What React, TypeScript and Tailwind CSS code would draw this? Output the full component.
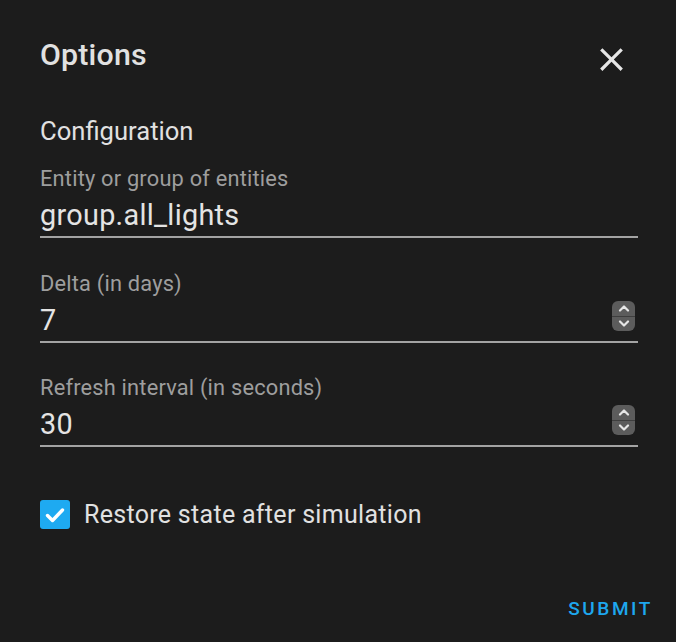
import React from "react";

function Spinner() {
  return (
    <div className="flex h-[30px] w-[23px] flex-col overflow-hidden rounded-[6px] bg-[#5c5c5c]">
      <div className="flex flex-1 items-center justify-center border-b border-[#3e3e3e]">
        <svg width="12" height="8" viewBox="0 0 12 8" fill="none">
          <path d="M2 6.5L6 2.5L10 6.5" stroke="#e6e6e6" strokeWidth="2.2" strokeLinecap="round" strokeLinejoin="round" />
        </svg>
      </div>
      <div className="flex flex-1 items-center justify-center">
        <svg width="12" height="8" viewBox="0 0 12 8" fill="none">
          <path d="M2 1.5L6 5.5L10 1.5" stroke="#e6e6e6" strokeWidth="2.2" strokeLinecap="round" strokeLinejoin="round" />
        </svg>
      </div>
    </div>
  );
}

function Field({ label, value, spin, mb }: { label: string; value: string; spin?: boolean; mb: string }) {
  return (
    <div className={mb}>
      <div className="text-[21.8px] leading-[24px] tracking-[0.2px] text-[#9e9e9e]">{label}</div>
      <div className="mt-[8px] flex items-center justify-between border-b-2 border-[#a3a3a3] pb-[5px]">
        <span className="text-[28.8px] leading-[32px] tracking-[0.3px] text-[#e4e4e4]">{value}</span>
        {spin && (
          <div className="mr-[3px] -mt-[8px]">
            <Spinner />
          </div>
        )}
      </div>
    </div>
  );
}

export default function App() {
  return (
    <div
      className="relative h-[642px] w-[676px] bg-[#1c1c1c] px-[38px] pt-[38px] text-[#e1e1e1]"
      style={{ fontFamily: "Roboto, 'Noto Sans', sans-serif" }}
    >
      <div className="flex items-start justify-between pl-[2px]">
        <div className="text-[30.3px] font-medium leading-[34px] tracking-[0.2px] text-[#e1e1e1]">Options</div>
        <svg width="39" height="39" viewBox="0 0 24 24" className="mr-[7px] mt-[2px]">
          <path
            fill="#e6e6e6"
            d="M19,6.41L17.59,5L12,10.59L6.41,5L5,6.41L10.59,12L5,17.59L6.41,19L12,13.41L17.59,19L19,17.59L13.41,12L19,6.41Z"
          />
        </svg>
      </div>
      <div className="mt-[37px] pl-[2px] text-[25.6px] leading-[30px] text-[#e1e1e1]">Configuration</div>
      <div className="mt-[21px] pl-[2px]">
        <Field label="Entity or group of entities" value="group.all_lights" mb="mb-[34px]" />
        <Field label="Delta (in days)" value="7" spin mb="mb-[33px]" />
        <Field label="Refresh interval (in seconds)" value="30" spin mb="mb-[53px]" />
        <div className="flex items-center gap-[14px]">
          <div className="flex h-[29px] w-[30px] items-center justify-center rounded-[3px] bg-[#1eaaf1]">
            <svg width="24" height="24" viewBox="0 0 24 24" fill="none">
              <path d="M4.5 12.5L9.5 17.5L19.5 7" stroke="#ffffff" strokeWidth="3.4" strokeLinecap="round" strokeLinejoin="round" />
            </svg>
          </div>
          <span className="text-[25px] leading-[28px] tracking-[0.3px] text-[#e1e1e1]">Restore state after simulation</span>
        </div>
      </div>
      <div className="absolute bottom-[22px] right-[23px] text-[19px] font-medium leading-[22px] tracking-[2.6px] text-[#1ea7ee]">
        SUBMIT
      </div>
    </div>
  );
}
